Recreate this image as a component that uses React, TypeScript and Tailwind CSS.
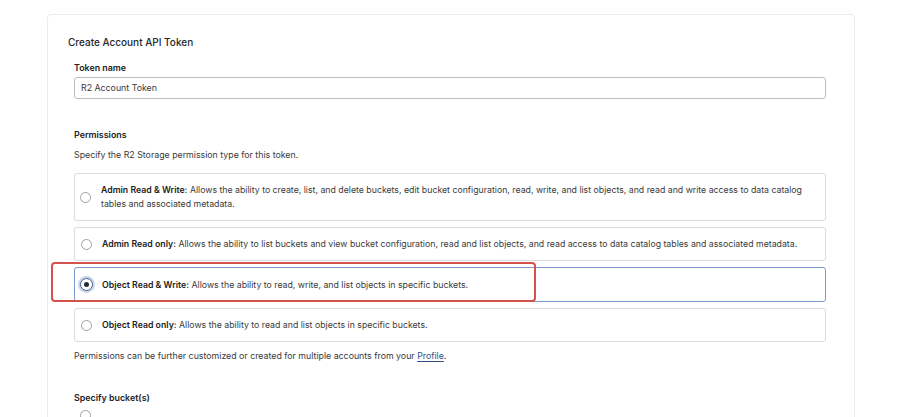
import React from "react";

const font = { fontFamily: "Inter, 'Noto Sans', sans-serif" };

function Radio({ checked }: { checked?: boolean }) {
  if (checked) {
    return (
      <span className="relative flex h-[13px] w-[13px] shrink-0 items-center justify-center rounded-full border border-[#3b5a8c] ring-2 ring-[#c9d6ea]">
        <span className="h-[5px] w-[5px] rounded-full bg-[#1f2a3c]" />
      </span>
    );
  }
  return <span className="h-[11px] w-[11px] shrink-0 rounded-full border border-[#a0a0a0] bg-white" />;
}

function Option({
  title,
  text,
  checked,
}: {
  title: string;
  text: string;
  checked?: boolean;
}) {
  return (
    <div
      className={`flex items-center gap-[10px] rounded-[3px] border bg-white pl-[5px] pr-4 ${
        checked ? "border-[#7b9acb] py-[9.5px]" : "border-[#dcdcdc] py-[9px]"
      }`}
    >
      <span className="flex w-[12px] justify-center">
        <Radio checked={checked} />
      </span>
      <p className="text-[8.75px] leading-[14px] text-[#3a3a3a]">
        <span className="font-semibold text-[#222]">{title}</span> {text}
      </p>
    </div>
  );
}

export default function App() {
  return (
    <div className="min-h-[417px] w-[900px] overflow-hidden bg-white" style={font}>
      <div className="relative ml-[47px] mt-[14px] h-[420px] w-[808px] rounded-[4px] border border-[#ececec] pl-[20px] pr-[28px] pt-[19px]">
        <h1 className="text-[10px] font-medium leading-[16px] text-[#262626]">Create Account API Token</h1>
        <div className="ml-[6px]">
          <label className="mt-[11px] block text-[8.9px] font-semibold leading-[14px] text-[#222]">Token name</label>
          <div className="mt-[2px] flex h-[22px] items-center rounded-[3px] border border-[#bdbdbd] px-[6px] text-[8.8px] text-[#3a3a3a]">
            R2 Account Token
          </div>

          <div className="mt-[29px] text-[8.9px] font-semibold leading-[14px] text-[#222]">Permissions</div>
          <div className="mt-[6px] text-[8.8px] leading-[14px] text-[#3a3a3a]">
            Specify the R2 Storage permission type for this token.
          </div>

          <div className="mt-[11px] flex flex-col gap-[6px]">
            <Option
              title="Admin Read & Write:"
              text="Allows the ability to create, list, and delete buckets, edit bucket configuration, read, write, and list objects, and read and write access to data catalog tables and associated metadata."
            />
            <Option
              title="Admin Read only:"
              text="Allows the ability to list buckets and view bucket configuration, read and list objects, and read access to data catalog tables and associated metadata."
            />
            <Option
              checked
              title="Object Read & Write:"
              text="Allows the ability to read, write, and list objects in specific buckets."
            />
            <Option title="Object Read only:" text="Allows the ability to read and list objects in specific buckets." />
          </div>

          <p className="mt-[7px] text-[8.8px] leading-[14px] text-[#3a3a3a]">
            Permissions can be further customized or created for multiple accounts from your{" "}
            <span className="text-[#2f4f86] underline decoration-[#2f4f86] underline-offset-2">Profile</span>.
          </p>

          <div className="mt-[28px] text-[8.9px] font-semibold leading-[14px] text-[#222]">Specify bucket(s)</div>
          <div className="mt-[5px] ml-[6px] h-[11px] w-[11px] rounded-full border border-[#a0a0a0]" />
        </div>

        <div className="pointer-events-none absolute left-[3px] top-[247px] h-[40px] w-[485px] rounded-[4px] border-2 border-[#d6504d]" />
      </div>
    </div>
  );
}
